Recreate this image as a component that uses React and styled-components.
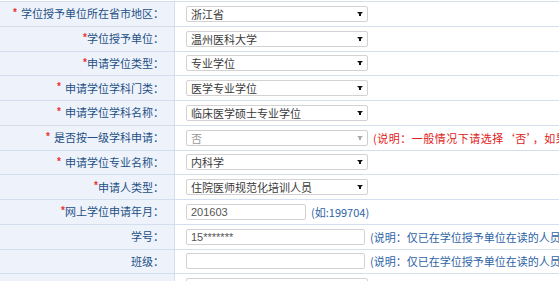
import React from 'react';
import styled, { createGlobalStyle } from 'styled-components';

const GlobalStyle = createGlobalStyle`
  html, body {
    margin: 0;
    padding: 0;
    overflow: hidden;
    background: #ffffff;
  }
  body {
    font-family: "Noto Sans CJK SC", "Liberation Sans", sans-serif;
    font-size: 11px;
  }
`;

const Form = styled.div`
  width: 700px;
  margin-top: 1px;
  border-top: 1px solid #d3dfef;
`;

const Row = styled.div`
  display: grid;
  grid-template-columns: 175px 1fr;
  height: 24.75px;
  box-sizing: border-box;
  border-bottom: 1px solid #d3dfef;
`;

const Label = styled.div`
  background: #eef3fb;
  border-right: 1px solid #d3dfef;
  color: #234f84;
  display: flex;
  align-items: center;
  justify-content: flex-end;
  padding-right: 10px;
  white-space: nowrap;
  line-height: 1;
`;

const Star = styled.span`
  color: #e8322f;
  font-size: 10px;
  align-self: flex-start;
  margin-top: 6px;
  margin-right: ${p => (p.$gap ? '4px' : '0')};
  font-family: "Liberation Sans", sans-serif;
  font-weight: bold;
`;

const Field = styled.div`
  display: flex;
  align-items: center;
  padding-left: 11px;
  gap: 5px;
  white-space: nowrap;
  overflow: hidden;
`;

const SelectBox = styled.div`
  position: relative;
  width: 182px;
  height: 16px;
  box-sizing: border-box;
  border: 1px solid ${p => (p.$disabled ? '#cfcfcf' : '#d2d2d2')};
  border-radius: 2px;
  background: #fff;
  color: ${p => (p.$disabled ? '#9a9a9a' : '#3a3a3a')};
  display: flex;
  align-items: center;
  padding-left: 4px;
  flex-shrink: 0;
`;

const Arrow = styled.span`
  position: absolute;
  right: 4px;
  top: 5px;
  width: 0;
  height: 0;
  border-left: 3.5px solid transparent;
  border-right: 3.5px solid transparent;
  border-top: 3px solid ${p => (p.$disabled ? '#a8a8a8' : '#111')};
  &::after {
    content: '';
    position: absolute;
    left: -1px;
    top: -3px;
    width: 2px;
    height: 4px;
    background: ${p => (p.$disabled ? '#a8a8a8' : '#111')};
  }
`;

const TextInput = styled.div`
  width: ${p => p.$w}px;
  height: 16px;
  box-sizing: border-box;
  border: 1px solid #d2d2d2;
  border-radius: 2px;
  background: #fff;
  color: #555;
  font-family: "Liberation Sans", "Noto Sans CJK SC", sans-serif;
  display: flex;
  align-items: center;
  padding-left: 4px;
  flex-shrink: 0;
`;

const Note = styled.span`
  color: ${p => (p.$red ? '#e02020' : '#2d63a6')};
  letter-spacing: ${p => (p.$red ? '0.5px' : '0')};
  font-family: "Noto Sans CJK SC", "Liberation Sans", sans-serif;
`;

const Select = ({ value, disabled }) => (
  <SelectBox $disabled={disabled}>
    {value}
    <Arrow $disabled={disabled} />
  </SelectBox>
);

const rows = [
  { star: true, gap: true, label: '学位授予单位所在省市地区：', select: '浙江省' },
  { star: true, label: '学位授予单位：', select: '温州医科大学' },
  { star: true, label: '申请学位类型：', select: '专业学位' },
  { star: true, gap: true, label: '申请学位学科门类：', select: '医学专业学位' },
  { star: true, gap: true, label: '申请学位学科名称：', select: '临床医学硕士专业学位' },
  {
    star: true,
    gap: true,
    label: '是否按一级学科申请：',
    select: '否',
    disabled: true,
    note: '(说明：一般情况下请选择‘否’，如果您申请的是一级学科学位请选择‘是’)',
    red: true,
  },
  { star: true, gap: true, label: '申请学位专业名称：', select: '内科学' },
  { star: true, label: '申请人类型：', select: '住院医师规范化培训人员' },
  { star: true, label: '网上学位申请年月：', input: '201603', w: 120, note: '(如:199704)' },
  { label: '学号：', input: '15*******', w: 179, note: '(说明：仅已在学位授予单位在读的人员需填写学号)' },
  { label: '班级：', input: '', w: 179, note: '(说明：仅已在学位授予单位在读的人员需填写班级)' },
  { label: '', select: '' },
];

const App = () => (
  <>
    <GlobalStyle />
    <Form>
      {rows.map((r, i) => (
        <Row key={i}>
          <Label>
            {r.star && <Star $gap={r.gap}>*</Star>}
            {r.label}
          </Label>
          <Field>
            {r.select !== undefined && <Select value={r.select} disabled={r.disabled} />}
            {r.input !== undefined && <TextInput $w={r.w}>{r.input}</TextInput>}
            {r.note && <Note $red={r.red}>{r.note}</Note>}
          </Field>
        </Row>
      ))}
    </Form>
  </>
);

export default App;
